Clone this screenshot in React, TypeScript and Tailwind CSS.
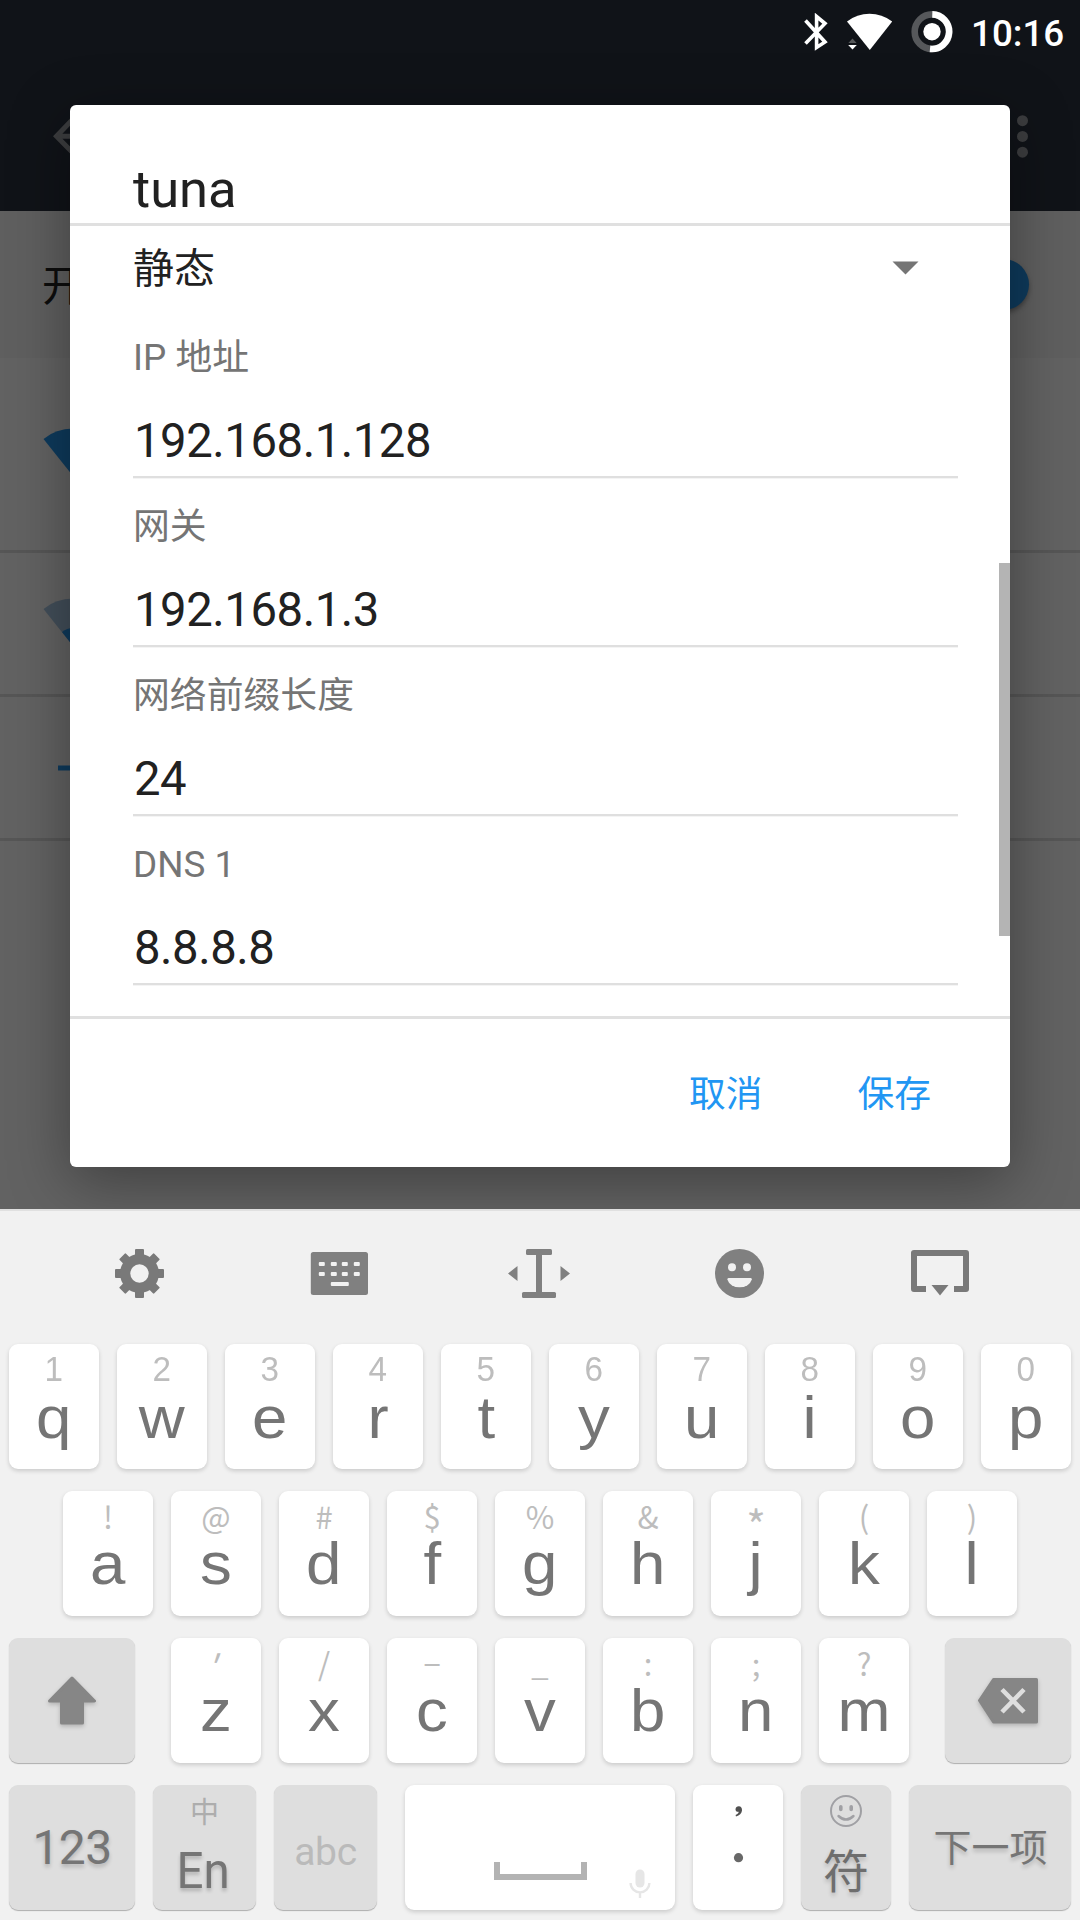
import React from "react";

const roboto = "font-['Roboto','Noto_Sans_CJK_SC',sans-serif]";
const cjk = "font-['Noto_Sans_CJK_SC',sans-serif]";

function StatusBar() {
  return (
    <div className="flex h-[66px] items-start justify-end pr-[16px] pt-[8px]">
      <svg className="mt-[5px] h-[38px] w-[24px]" viewBox="0 0 24 38" fill="none" stroke="#fff" strokeWidth="3.6">
        <path d="M1.5 7.5 L21 29 L12.6 34.5 V3.5 L21 10.5 L1.5 30.5" strokeLinejoin="miter" />
      </svg>
      <svg className="ml-[19px] mt-[5px] h-[38px] w-[46px]" viewBox="0 0 46 38">
        <path d="M0 8.5 Q10 0.8 22.5 0.8 Q35 0.8 45.2 8.5 L22.8 37 Z" fill="#fff" />
        <path d="M5.5 23.5 L-1 31 H0.8 V38 H11 V31Z" fill="#101318" />
        <path d="M5.5 25.5 L9.6 30 H1.4Z" fill="#555759" />
        <path d="M5.5 36.5 L9.8 32 H1.2Z" fill="#fff" />
      </svg>
      <svg className="ml-[18px] mt-[3px] h-[42px] w-[42px]" viewBox="0 0 42 42" fill="none" strokeWidth="6.6">
        <circle cx="21" cy="20.7" r="17.3" stroke="#56585b" />
        <path d="M21.3 3.4 A17.3 17.3 0 1 1 19 37.9" stroke="#fff" />
        <circle cx="21" cy="20.7" r="8.7" fill="#fff" />
      </svg>
      <span className="ml-[18px] mt-[1px] h-[50px] w-[93px] whitespace-nowrap text-[36.75px] font-medium leading-[50px] text-white">10:16</span>
    </div>
  );
}

function Backdrop() {
  return (
    <div className="h-[1209px] bg-[#626262]">
      <div className="h-[211px] bg-[#101318] shadow-[0_1px_4px_rgba(0,0,0,0.5)]">
        <StatusBar />
        <div className="flex h-[145px] items-start justify-between pl-[53px] pr-[51px] pt-[48px]">
          <svg className="h-[44px] w-[44px]" viewBox="0 0 44 44" fill="none" stroke="#3c3d3f" strokeWidth="5">
            <path d="M21 4 L3.5 22.3 L21 40 M4 22.3 H42" />
          </svg>
          <svg className="h-[46px] w-[13px]" viewBox="0 0 13 46" fill="#3c3d3f">
            <circle cx="6.5" cy="6.7" r="5.5" />
            <circle cx="6.5" cy="22.4" r="5.5" />
            <circle cx="6.5" cy="38.2" r="5.5" />
          </svg>
        </div>
      </div>
      <div className="flex h-[147px] items-center justify-between bg-[#5f5f5f] pl-[42px] pr-[51px]">
        <span className="mt-[4px] text-[42px] leading-[50px] text-[#0d0d0d]">开启</span>
        <span className="h-[51px] w-[51px] rounded-full bg-[#0e3a5c] shadow-[0_3px_5px_rgba(0,0,0,0.35)]" />
      </div>
      <div className="flex h-[195px] items-center border-b-[3px] border-[#565656] pb-[5px] pl-[43px]">
        <svg className="h-[50px] w-[60px]" viewBox="0 0 60 50">
          <path d="M0.5 12 Q13 1.5 30 1.5 Q47 1.5 59.5 12 L30 49Z" fill="#0e3a5c" />
        </svg>
      </div>
      <div className="flex h-[144px] items-center border-b-[3px] border-[#565656] pb-[4px] pl-[43px]">
        <svg className="h-[50px] w-[60px]" viewBox="0 0 60 50">
          <path d="M0.5 12 Q13 1.5 30 1.5 Q47 1.5 59.5 12 L30 49Z" fill="#424e59" />
          <path d="M19 35 Q24 31 30 31 Q36 31 41 35 L30 49Z" fill="#0e3a5c" />
        </svg>
      </div>
      <div className="flex h-[144px] items-center border-b-[3px] border-[#565656] pl-[58px]">
        <svg className="h-[36px] w-[36px]" viewBox="0 0 36 36" fill="#0e3a5c">
          <path d="M0 15.5H15V0H21V15.5H36V20.5H21V36H15V20.5H0Z" />
        </svg>
      </div>
    </div>
  );
}

const fields = [
  { label: "IP 地址", value: "192.168.1.128" },
  { label: "网关", value: "192.168.1.3" },
  { label: "网络前缀长度", value: "24" },
  { label: "DNS 1", value: "8.8.8.8" },
];

function Dialog() {
  return (
    <div className="absolute left-[70px] top-[105px] flex h-[1062px] w-[940px] flex-col rounded-[6px] bg-white shadow-[0_14px_60px_rgba(0,0,0,0.36)]">
      <div className="h-[121px] border-b-[3px] border-[#e0e0e0] pl-[63px] pt-[54px] text-[52.5px] leading-[60px] text-[#212121]">tuna</div>
      <div className="relative h-[793px] border-b-[3px] border-[#e0e0e0] pl-[63px] pr-[52px]">
        <div className="flex h-[83px] items-center justify-between pr-[39px]">
          <span className="mt-[3px] text-[41px] leading-[50px] text-[#212121]">静态</span>
          <svg className="h-[14px] w-[27px]" viewBox="0 0 27 14" fill="#757575">
            <path d="M0.5 0.5H26.5L13.5 13.5Z" />
          </svg>
        </div>
        {fields.map((f) => (
          <div key={f.label} className="flex h-[169px] flex-col border-b-2 border-[#dfdfdf] shadow-[0_1px_0_#f4f4f4]">
            <span className="mt-[27px] h-[44px] whitespace-nowrap text-[36.85px] leading-[44px] text-[#757575]">{f.label}</span>
            <span className="ml-[1px] mt-[34px] h-[54px] text-[47.25px] leading-[54px] tracking-[-0.45px] text-[#212121]">{f.value}</span>
          </div>
        ))}
        <div className="absolute right-0 top-[337px] h-[373px] w-[11px] bg-[#b4b4b4]" />
      </div>
      <div className="flex flex-1 items-center justify-end gap-[95px] pr-[79px] pt-[4px] text-[36.75px] leading-[44px] text-[#2196f3]">
        <span>取消</span>
        <span>保存</span>
      </div>
    </div>
  );
}

const white = "bg-white shadow-[0_2px_4px_rgba(0,0,0,0.16)]";
const gray = "bg-[#dedede] shadow-[0_1px_1px_rgba(0,0,0,0.28)]";
const embossed = "[text-shadow:0_3px_4px_rgba(0,0,0,0.2)]";

function hintStyle(hint: string, digit?: boolean) {
  if (digit) return "font-['Liberation_Sans',sans-serif] text-[35px] scale-x-95";
  if (hint === "*") return "font-['Noto_Sans_CJK_SC',sans-serif] text-[42px] pt-[8px]";
  if (hint === "′") return "font-['Noto_Sans_CJK_SC',sans-serif] text-[36px] -skew-x-12 pt-[2px]";
  return "font-['Noto_Sans_CJK_SC',sans-serif] text-[31px]";
}

function LetterKey({ hint, letter, digit }: { hint: string; letter: string; digit?: boolean }) {
  return (
    <div className={`flex h-[125px] w-[90px] shrink-0 flex-col items-center rounded-[9px] ${white}`}>
      <span className={`mt-[5px] h-[40px] leading-[40px] text-[#bdbdbd] ${hintStyle(hint, digit)}`}>{hint}</span>
      <span className={`h-[60px] scale-x-[1.06] font-['Liberation_Sans',sans-serif] text-[60px] text-[#757575] ${digit ? "leading-[57px]" : "leading-[55px]"}`}>{letter}</span>
    </div>
  );
}

const row1 = ["1q", "2w", "3e", "4r", "5t", "6y", "7u", "8i", "9o", "0p"];
const row2 = ["!a", "@s", "#d", "$f", "%g", "&h", "*j", "(k", ")l"];
const row3 = ["′z", "/x", "−c", "_v", ":b", ";n", "?m"];

function Toolbar() {
  return (
    <div className="flex h-[133px] justify-between border-t-2 border-[#e0e0e0] pl-[109px] pr-[109px] pt-[32px]">
      <svg className="h-[62px] w-[62px]" viewBox="-30.5 -30.5 62 62" fill="#797979">
        {[0, 45, 90, 135].map((a) => (
          <rect key={a} x="-4.5" y="-24.5" width="9" height="49" rx="1" transform={`rotate(${a})`} />
        ))}
        <circle r="19.5" />
        <circle r="9.2" fill="#f1f1f1" />
      </svg>
      <svg className="h-[62px] w-[62px]" viewBox="0 0 62 62">
        <rect x="1.8" y="9" width="57.2" height="43" rx="2.5" fill="#808080" />
        <g fill="#f1f1f1">
          {[9.8, 21.8, 32.8, 44.8].map((x) => (
            <React.Fragment key={x}>
              <rect x={x} y="19" width="6" height="4" rx="1" />
              <rect x={x} y="29" width="6" height="4" rx="1" />
            </React.Fragment>
          ))}
          <rect x="21.8" y="39" width="18" height="4" rx="1" />
        </g>
      </svg>
      <svg className="h-[62px] w-[62px]" viewBox="509 1243 62 62" fill="#808080" overflow="visible">
        <path d="M508 1273.5L517.5 1266V1281Z M570 1273.5L560.5 1266V1281Z" />
        <rect x="526" y="1249" width="26" height="6" rx="1.5" />
        <rect x="522" y="1292" width="34" height="6" rx="1.5" />
        <rect x="536" y="1252" width="6" height="43" />
      </svg>
      <svg className="h-[62px] w-[62px]" viewBox="709 1243 62 62">
        <circle cx="739.5" cy="1273.5" r="24.5" fill="#808080" />
        <g fill="#f1f1f1">
          <circle cx="732" cy="1267.3" r="4" />
          <circle cx="747" cy="1267.3" r="4" />
          <path d="M728.5 1278H750.8Q752 1278 751.8 1279.5A12.5 10 0 0 1 727.4 1279.5Q727.2 1278 728.5 1278Z" />
        </g>
      </svg>
      <svg className="h-[62px] w-[62px]" viewBox="909 1243 62 62">
        <path d="M926 1289H914V1253H966V1289H954" fill="none" stroke="#797979" strokeWidth="6" strokeLinejoin="round" />
        <path d="M931.5 1285H948.5L940 1295.5Z" fill="#797979" />
      </svg>
    </div>
  );
}

function Keyboard() {
  return (
    <div className="h-[711px] bg-[#f1f1f1]">
      <Toolbar />
      <div className="flex flex-col gap-[22px] pt-[2px]">
        <div className="flex gap-[18px] px-[9px]">
          {row1.map((k) => <LetterKey key={k} hint={k[0]} letter={k[1]} digit />)}
        </div>
        <div className="flex gap-[18px] px-[63px]">
          {row2.map((k) => <LetterKey key={k} hint={k[0]} letter={k[1]} />)}
        </div>
        <div className="flex justify-between px-[9px]">
          <div className={`flex h-[125px] w-[126px] items-center justify-center rounded-[9px] ${gray}`}>
            <svg className="h-[60px] w-[60px] drop-shadow-[0_2px_2px_rgba(0,0,0,0.2)]" viewBox="42 1670.5 60 60" fill="#868686" stroke="#868686" strokeWidth="3" strokeLinejoin="round">
              <path d="M72 1677.5L94.5 1700.5H82.5V1722.5H61.5V1700.5H49.5Z" />
            </svg>
          </div>
          <div className="flex gap-[18px]">
            {row3.map((k) => <LetterKey key={k} hint={k[0]} letter={k[1]} />)}
          </div>
          <div className={`flex h-[125px] w-[126px] items-center justify-center rounded-[9px] ${gray}`}>
            <svg className="h-[60px] w-[66px] drop-shadow-[0_2px_2px_rgba(0,0,0,0.2)]" viewBox="975 1670.5 66 60">
              <path d="M979.5 1700L993.5 1679H1036.5V1721.5H993.5Z" fill="#868686" stroke="#868686" strokeWidth="3" strokeLinejoin="round" />
              <path d="M1002 1689L1024 1711.5M1024 1689L1002 1711.5" stroke="#dedede" strokeWidth="4.6" />
            </svg>
          </div>
        </div>
        <div className="flex px-[9px]">
          <div className={`flex h-[125px] w-[126px] justify-center rounded-[9px] pt-[35px] text-[48px] leading-[56px] tracking-[-0.7px] text-[#757575] ${gray} ${embossed}`}>123</div>
          <div className={`ml-[18px] flex h-[125px] w-[103px] flex-col items-center rounded-[9px] ${gray}`}>
            <span className={`mt-[7px] h-[36px] text-[29px] leading-[36px] text-[#adadad] ${cjk}`}>中</span>
            <span className={`mt-[15px] h-[56px] scale-x-95 pr-[2px] text-[50px] leading-[56px] text-[#757575] ${embossed}`}>En</span>
          </div>
          <div className={`ml-[18px] flex h-[125px] w-[103px] justify-center rounded-[9px] pt-[42px] text-[39px] leading-[50px] tracking-[-0.3px] text-[#bababa] ${gray}`}>abc</div>
          <div className={`ml-[28px] flex h-[125px] w-[270px] items-end rounded-[9px] pb-[10px] pl-[89px] ${white}`}>
            <svg className="mb-[20px] h-[18px] w-[93px]" viewBox="0 0 93 18" fill="none" stroke="#b3b3b3" strokeWidth="6">
              <path d="M3 0V15H90V0" />
            </svg>
            <svg className="ml-[42px] h-[32px] w-[22px]" viewBox="629 1868 22 32">
              <rect x="635.5" y="1869.5" width="9" height="18" rx="4.5" fill="#e6e6e6" />
              <path d="M630.6 1883A9.4 9.4 0 0 0 649.4 1883M640 1892V1898" fill="none" stroke="#e6e6e6" strokeWidth="2.4" />
            </svg>
          </div>
          <div className={`ml-[18px] flex h-[125px] w-[90px] justify-center rounded-[9px] ${white}`}>
            <svg className="h-[125px] w-[90px]" viewBox="693 1785 90 125">
              <path d="M738.8 1806.3C741 1806.3 742.2 1808 742 1810.4C741.7 1813.2 739.5 1815.5 736 1816.4L735.6 1815C737.6 1814.2 738.6 1813 738.7 1811.8C736.7 1812 735.4 1810.9 735.5 1809.2C735.6 1807.5 737 1806.3 738.8 1806.3Z" fill="#505050" />
              <circle cx="738.5" cy="1857.7" r="4.6" fill="#686868" />
            </svg>
          </div>
          <div className={`ml-[18px] flex h-[125px] w-[90px] flex-col items-center rounded-[9px] pt-[9px] ${gray}`}>
            <svg className="h-[34px] w-[34px]" viewBox="-17 -17 34 34" fill="none" stroke="#a0a0a4" strokeWidth="2">
              <circle r="15" />
              <path d="M-7.5 5Q0 12 7.5 5" strokeWidth="2.4" strokeLinecap="round" />
              <path d="M-5.2 -4.2V-1.6M5.2 -4.2V-1.6" strokeWidth="3.6" strokeLinecap="round" />
            </svg>
            <span className={`mt-[12px] h-[56px] text-[46px] leading-[56px] text-[#6e6e6e] ${cjk} ${embossed}`}>符</span>
          </div>
          <div className={`ml-[18px] flex h-[125px] w-[162px] items-center justify-center rounded-[9px] pb-[5px] pl-[1px] text-[38px] leading-[48px] text-[#757575] ${gray} ${cjk} ${embossed}`}>下一项</div>
        </div>
      </div>
    </div>
  );
}

export default function App() {
  return (
    <div className={`relative h-[1920px] w-[1080px] overflow-hidden ${roboto}`}>
      <Backdrop />
      <Dialog />
      <div className="relative">
        <Keyboard />
      </div>
    </div>
  );
}
